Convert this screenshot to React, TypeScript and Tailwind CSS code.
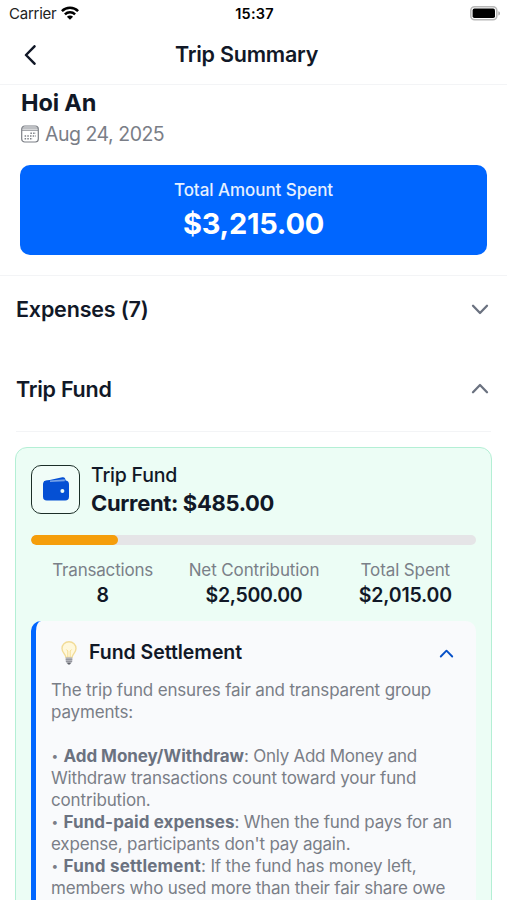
import type { ReactNode } from "react";

function Chevron({ up, className }: { up?: boolean; className: string }) {
  return (
    <svg viewBox="0 0 18 11" fill="none" stroke="currentColor" strokeWidth="2.3" strokeLinecap="round" strokeLinejoin="round" className={className}>
      <path d={up ? "M2 9.200 9 2l7 7.200" : "M2 1.800 9 9l7-7.200"} />
    </svg>
  );
}

function StatusBar() {
  return (
    <div className="grid h-[27px] shrink-0 grid-cols-3 items-center pr-[7px] pl-[9px] text-black">
      <div className="flex items-center gap-[5px] pt-px">
        <span className="text-[15px] tracking-[-0.250px] text-[#222]">Carrier</span>
        <svg viewBox="0 0 18 14" className="mb-[2px] h-[14px] w-[18px]" fill="none" stroke="currentColor" strokeWidth="2.500">
          <path d="M.9 5.100C5.400.6 12.600.6 17.100 5.100" />
          <path d="M3.900 8.300c2.900-2.800 7.300-2.800 10.200 0" />
          <path d="M9 13.800 5.900 10.700c1.700-1.600 4.500-1.600 6.200 0Z" fill="currentColor" stroke="none" />
        </svg>
      </div>
      <span className="text-center text-[14.500px] font-semibold tracking-[0.200px]">15:37</span>
      <svg viewBox="0 0 31 15" className="mb-px h-[15px] w-[31px] justify-self-end">
        <rect x="1.800" y=".8" width="26" height="13" rx="3.800" fill="#fff" stroke="#b8b8b8" strokeWidth="1.600" />
        <rect x="3.600" y="2.600" width="22.400" height="9.400" rx="1.800" fill="#000" />
        <path d="M29.300 5.200c2.400.7 2.400 3.700 0 4.400Z" fill="#b0b0b0" />
      </svg>
    </div>
  );
}

function CalendarIcon() {
  return (
    <svg viewBox="0 0 18 18" className="h-[18px] w-[18px] text-[#7d8087]" fill="none" stroke="currentColor">
      <rect x=".7" y="1" width="16.600" height="16" rx="3" strokeWidth="1.200" />
      <path d="M1 3h16M1 5.200h16" strokeWidth="1" />
      <path d="M9.400 8.200H15M3.600 11H15M3.600 13.800h8.200" strokeWidth="1.600" strokeDasharray="1.500 1.200" />
    </svg>
  );
}

function WalletIcon() {
  return (
    <svg viewBox="0 0 26 24" className="mb-[2px] h-6 w-[26px]">
      <path d="M1 4.200 19.300.3c2-.4 3 .6 3.300 3L23 6H1Z" fill="#0550d4" />
      <rect y="3.400" width="26" height="20.200" rx="3.800" fill="#0550d4" />
      <path d="M7 3.600 21.800 2.200v2.100L7 4.900Z" fill="#76a2e8" />
      <circle cx="19.400" cy="14" r="2" fill="#edfbf6" />
    </svg>
  );
}

function BulbIcon() {
  return (
    <svg viewBox="0 0 16 24" className="h-6 w-4">
      <path d="M8 .8C3.900.800 1 3.800 1 7.500c0 4 3.300 5.200 4 9h6c.700-3.800 4-5 4-9C15 3.800 12.100.800 8 .800Z" fill="#fff8dc" stroke="#f2dc98" strokeWidth="1.400" />
      <path d="M5.400 8.500 6.800 10v6M10.600 8.500 9.200 10v6" stroke="#f2d67d" strokeWidth=".8" fill="none" />
      <path d="M4.700 16.200h6.600v4.200L9.700 23H6.300l-1.600-2.600Z" fill="#b9bac0" />
      <path d="M4.700 18.300h6.600M5 20.400h6" stroke="#85878e" strokeWidth=".8" />
      <path d="M6.300 21.800h3.400L9 23.500H7Z" fill="#5f6168" />
    </svg>
  );
}

function Stat({ label, value, labelClass, valueClass }: { label: string; value: string; labelClass: string; valueClass: string }) {
  return (
    <div className="flex flex-1 flex-col items-center whitespace-nowrap">
      <span className={`text-[17px] leading-[24px] text-[#7a8088] ${labelClass}`}>{label}</span>
      <span className={`text-[19.500px] leading-[26px] font-semibold text-[#111827] ${valueClass}`}>{value}</span>
    </div>
  );
}

function Line({ children, className = "" }: { children?: ReactNode; className?: string }) {
  return <div className={`h-[22px] ${className}`}>{children}</div>;
}

function Bullet({ title, titleClass, textClass, children }: { title: string; titleClass: string; textClass: string; children: ReactNode }) {
  return (
    <div className="flex h-[22px]">
      <span className="w-[12.500px] pl-px text-[12px] font-bold">•</span>
      <span className={`font-bold text-[#6b7280] ${titleClass}`}>{title}</span>
      <span className={`whitespace-pre ${textClass}`}>{children}</span>
    </div>
  );
}

export default function App() {
  return (
    <div className="flex h-[900px] w-[507px] flex-col overflow-hidden bg-white font-['Inter','Liberation_Sans',sans-serif] whitespace-nowrap text-[#111827]">
      <StatusBar />
      <header className="grid h-[58px] shrink-0 grid-cols-[60px_1fr_74px] items-center border-b border-[#f3f4f6] pb-[2px]">
        <svg viewBox="0 0 12 20" className="ml-[24px] h-5 w-3" fill="none" stroke="#111827" strokeWidth="2.500" strokeLinecap="round" strokeLinejoin="round">
          <path d="M10.500 1.300 2 10l8.500 8.700" />
        </svg>
        <h1 className="text-center text-[21.500px] font-semibold tracking-[-0.230px]">Trip Summary</h1>
      </header>

      <section className="flex h-[191px] shrink-0 flex-col border-b border-[#f3f4f6] px-5">
        <h2 className="mt-[2px] ml-px text-[23.500px] leading-8 font-bold tracking-[-0.150px]">Hoi An</h2>
        <div className="mt-[3px] flex h-6 items-center gap-[6px] pl-[1px]">
          <CalendarIcon />
          <span className="pt-px text-[19.500px] tracking-[-0.480px] text-[#7a7e87]">Aug 24, 2025</span>
        </div>
        <div className="mt-[19px] flex h-[90px] flex-col items-center rounded-[10px] bg-[#0066ff] pt-[13px] text-white">
          <span className="text-[17px] leading-6 font-medium tracking-[-0.050px] text-[#e6f0ff]">Total Amount Spent</span>
          <span className="mt-[2px] text-[29px] leading-10 font-bold tracking-[-0.250px]">$3,215.00</span>
        </div>
      </section>

      <div className="flex h-[66px] shrink-0 items-center justify-between pr-[18px] pl-4">
        <h3 className="pt-px text-[21.500px] font-semibold tracking-[-0.180px]">Expenses (7)</h3>
        <Chevron className="h-[11px] w-[18px] text-[#6b7280]" />
      </div>

      <div className="mx-4 mt-4 flex h-[74px] shrink-0 items-start justify-between border-b border-[#f3f4f6] pt-[15px]">
        <h3 className="text-[21.500px] leading-8 font-semibold tracking-[-0.250px]">Trip Fund</h3>
        <Chevron up className="mt-[10px] mr-[2px] h-[11px] w-[18px] text-[#6b7280]" />
      </div>

      <section className="mx-[15px] mt-[15px] h-[600px] shrink-0 rounded-[12px] border border-[#b4efd5] bg-[#ecfdf5] px-[15px] pt-[17px]">
        <div className="flex h-[53px] gap-[11px]">
          <div className="flex h-[49px] w-[49px] items-center justify-center rounded-[10px] border border-[#1c2f28] bg-[#f1fdf8]">
            <WalletIcon />
          </div>
          <div>
            <div className="-mt-[3px] text-[19.500px] leading-[27px] font-medium tracking-[-0.200px]">Trip Fund</div>
            <div className="text-[22px] leading-[28px] font-bold tracking-[-0.340px]">Current: $485.00</div>
          </div>
        </div>
        <div className="mt-[17px] h-[10px] overflow-hidden rounded-full bg-[#e5e5e7]">
          <div className="h-full w-[87px] rounded-full bg-[#f59e0b]" />
        </div>
        <div className="-mr-[5px] -ml-[4px] mt-[13px] flex">
          <Stat label="Transactions" value="8" labelClass="tracking-[-0.200px]" valueClass="" />
          <Stat label="Net Contribution" value="$2,500.00" labelClass="tracking-[-0.110px]" valueClass="tracking-[-0.330px]" />
          <Stat label="Total Spent" value="$2,015.00" labelClass="tracking-[-0.120px]" valueClass="tracking-[-0.200px]" />
        </div>

        <div className="mt-[13px] h-[500px] rounded-[10px] border-l-[5px] border-[#0066ff] bg-[#f9fafc] pl-[15px]">
          <div className="flex h-[58px] items-center pt-[6px]">
            <div className="ml-[10px]"><BulbIcon /></div>
            <h4 className="ml-[12px] text-[19.500px] font-semibold tracking-[-0.040px]">Fund Settlement</h4>
            <Chevron up className="mr-[22px] ml-auto h-[9px] w-[15px] text-[#0550c8]" />
          </div>
          <div className="text-[17px] leading-[22px] text-[#7a7e87]">
            <Line className="tracking-[-0.155px]">The trip fund ensures fair and transparent group</Line>
            <Line className="tracking-[-0.170px]">payments:</Line>
            <Line />
            <Bullet title="Add Money/Withdraw" titleClass="tracking-[-0.040px]" textClass="tracking-[-0.260px]">: Only Add Money and</Bullet>
            <Line className="tracking-[-0.175px]">Withdraw transactions count toward your fund</Line>
            <Line className="tracking-[-0.150px]">contribution.</Line>
            <Bullet title="Fund-paid expenses" titleClass="tracking-[0.080px]" textClass="tracking-[-0.210px]">: When the fund pays for an</Bullet>
            <Line className="tracking-[-0.180px]">expense, participants don't pay again.</Line>
            <Bullet title="Fund settlement" titleClass="tracking-[0.230px]" textClass="tracking-[-0.150px]">: If the fund has money left,</Bullet>
            <Line className="tracking-[-0.200px]">members who used more than their fair share owe</Line>
          </div>
        </div>
      </section>
    </div>
  );
}
